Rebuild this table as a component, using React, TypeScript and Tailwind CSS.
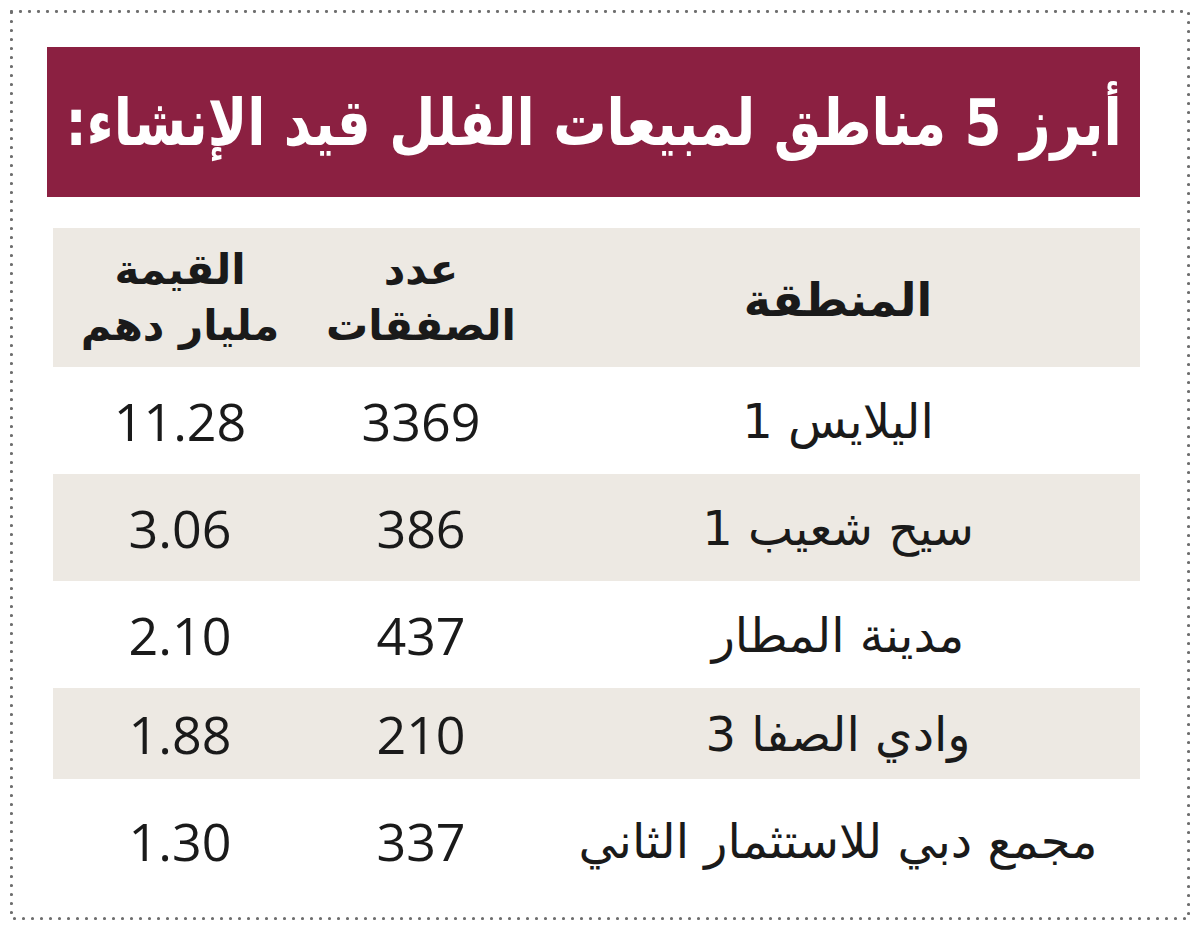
import React from "react";

const rows: { name: string; count: string; value: string; h: string; bg: string }[] = [
  { name: "اليلايس 1", count: "3369", value: "11.28", h: "h-[107px]", bg: "bg-white" },
  { name: "سيح شعيب 1", count: "386", value: "3.06", h: "h-[107px]", bg: "bg-[#ede9e3]" },
  { name: "مدينة المطار", count: "437", value: "2.10", h: "h-[107px]", bg: "bg-white" },
  { name: "وادي الصفا 3", count: "210", value: "1.88", h: "h-[91px]", bg: "bg-[#ede9e3]" },
  { name: "مجمع دبي للاستثمار الثاني", count: "337", value: "1.30", h: "h-[124px]", bg: "bg-white" },
];

const ar = "[font-family:'DejaVu_Sans',sans-serif]";
const arc = "[font-family:'DejaVu_Sans_Condensed','DejaVu_Sans',sans-serif]";
const num = "[font-family:'Open_Sans','DejaVu_Sans',sans-serif]";

export default function App() {
  return (
    <div className="w-[1200px] h-[936px] bg-white pt-[10px] pl-[10px]">
      <div className="relative w-[1180px] h-[910px] pt-[37px] pl-[37px] pr-[50px]" dir="rtl">
        <svg className="absolute inset-0 pointer-events-none" width="1180" height="910">
          <rect
            x="1.5"
            y="1.5"
            width="1177"
            height="907"
            fill="none"
            stroke="#6f6f6f"
            strokeWidth="3.2"
            strokeDasharray="0 9"
            strokeLinecap="round"
          />
        </svg>
        <div className="h-[150px] bg-[#8b2041] flex items-center justify-center overflow-hidden">
          <h1 className={`${arc} text-white font-bold text-[59px] leading-none whitespace-nowrap scale-y-110`}>
            أبرز 5 مناطق لمبيعات الفلل قيد الإنشاء:
          </h1>
        </div>
        <div className="mt-[31px] ml-[6px]">
          <div className={`grid grid-cols-[604px_230px_252px] h-[139px] bg-[#ede9e3] text-[#1a1a1a] font-bold ${ar}`}>
            <div className="flex items-center justify-center text-[46px] leading-none pt-[4px]">المنطقة</div>
            <div className="flex flex-col items-center justify-center text-[42px] leading-[56px]">
              <span>عدد</span>
              <span>الصفقات</span>
            </div>
            <div className="flex flex-col items-center justify-center text-[42px] leading-[56px]">
              <span>القيمة</span>
              <span>مليار دهم</span>
            </div>
          </div>
          {rows.map((r) => (
            <div key={r.name} className={`grid grid-cols-[604px_230px_252px] ${r.h} ${r.bg} text-[#1a1a1a]`}>
              <div className={`flex items-center justify-center ${ar} text-[48px] leading-none`}>{r.name}</div>
              <div className={`flex items-center justify-center ${num} text-[52px] leading-none`}>{r.count}</div>
              <div className={`flex items-center justify-center ${num} text-[52px] leading-none`}>{r.value}</div>
            </div>
          ))}
        </div>
      </div>
    </div>
  );
}
